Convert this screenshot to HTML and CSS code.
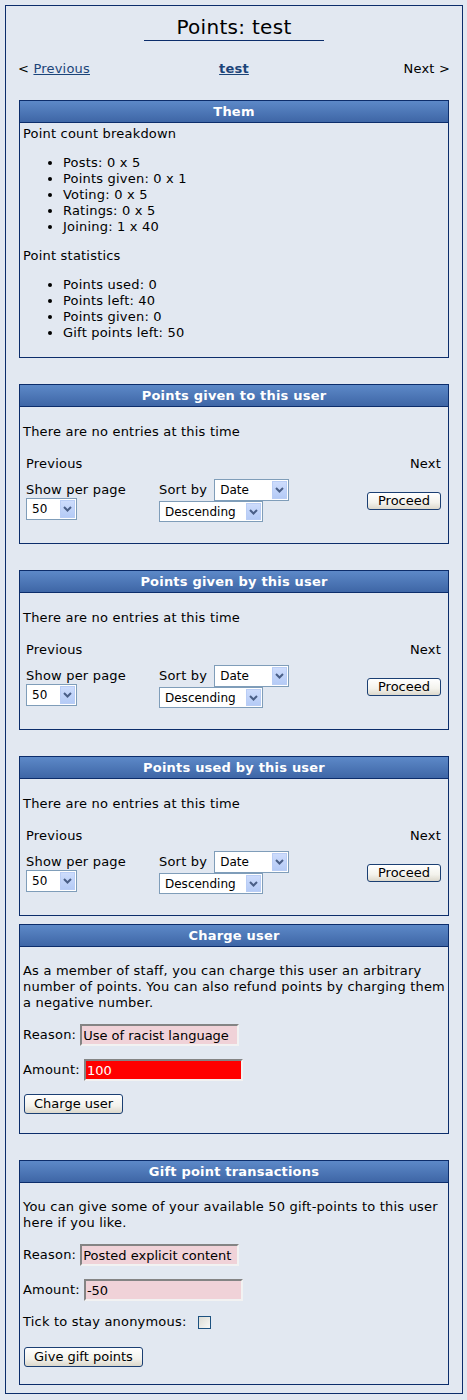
FILE: index.html
```html
<!DOCTYPE html>
<html lang="en">
<head>
  <meta charset="UTF-8" />
  <title>Points: test</title>
  <link rel="stylesheet" href="styles.css">
</head>
<body>
  <div class="page">
    <h1 class="title">Points: test</h1>

    <div class="nav">
      <span class="nav-prev">&lt; <a href="#">Previous</a></span>
      <a class="nav-current" href="#">test</a>
      <span class="nav-next">Next &gt;</span>
    </div>

    <div class="box">
      <div class="box-head">Them</div>
      <div class="box-body">
        Point count breakdown
        <ul>
          <li>Posts: 0 x 5</li>
          <li>Points given: 0 x 1</li>
          <li>Voting: 0 x 5</li>
          <li>Ratings: 0 x 5</li>
          <li>Joining: 1 x 40</li>
        </ul>
        Point statistics
        <ul>
          <li>Points used: 0</li>
          <li>Points left: 40</li>
          <li>Points given: 0</li>
          <li>Gift points left: 50</li>
        </ul>
      </div>
    </div>

    <div class="box">
      <div class="box-head">Points given to this user</div>
      <div class="box-body">
        <p class="empty">There are no entries at this time</p>
        <div class="pager">
          <div class="pager-prev">Previous</div>
          <div></div>
          <div class="pager-next">Next</div>
          <div class="pager-per">
            Show per page
            <span class="select select-num"><select><option>50</option></select><span class="select-arrow"><svg width="9" height="6" viewBox="0 0 9 6"><polyline points="1,1 4.5,4.5 8,1" fill="none" stroke="#4a5f87" stroke-width="2"/></svg></span></span>
          </div>
          <div class="pager-sort">
            <div class="sort-row">Sort by <span class="select select-field"><select><option>Date</option></select><span class="select-arrow"><svg width="9" height="6" viewBox="0 0 9 6"><polyline points="1,1 4.5,4.5 8,1" fill="none" stroke="#4a5f87" stroke-width="2"/></svg></span></span></div>
            <span class="select select-order"><select><option>Descending</option></select><span class="select-arrow"><svg width="9" height="6" viewBox="0 0 9 6"><polyline points="1,1 4.5,4.5 8,1" fill="none" stroke="#4a5f87" stroke-width="2"/></svg></span></span>
          </div>
          <div class="pager-go"><button class="btn btn-small">Proceed</button></div>
        </div>
      </div>
    </div>

    <div class="box">
      <div class="box-head">Points given by this user</div>
      <div class="box-body">
        <p class="empty">There are no entries at this time</p>
        <div class="pager">
          <div class="pager-prev">Previous</div>
          <div></div>
          <div class="pager-next">Next</div>
          <div class="pager-per">
            Show per page
            <span class="select select-num"><select><option>50</option></select><span class="select-arrow"><svg width="9" height="6" viewBox="0 0 9 6"><polyline points="1,1 4.5,4.5 8,1" fill="none" stroke="#4a5f87" stroke-width="2"/></svg></span></span>
          </div>
          <div class="pager-sort">
            <div class="sort-row">Sort by <span class="select select-field"><select><option>Date</option></select><span class="select-arrow"><svg width="9" height="6" viewBox="0 0 9 6"><polyline points="1,1 4.5,4.5 8,1" fill="none" stroke="#4a5f87" stroke-width="2"/></svg></span></span></div>
            <span class="select select-order"><select><option>Descending</option></select><span class="select-arrow"><svg width="9" height="6" viewBox="0 0 9 6"><polyline points="1,1 4.5,4.5 8,1" fill="none" stroke="#4a5f87" stroke-width="2"/></svg></span></span>
          </div>
          <div class="pager-go"><button class="btn btn-small">Proceed</button></div>
        </div>
      </div>
    </div>

    <div class="box box-tight">
      <div class="box-head">Points used by this user</div>
      <div class="box-body">
        <p class="empty">There are no entries at this time</p>
        <div class="pager">
          <div class="pager-prev">Previous</div>
          <div></div>
          <div class="pager-next">Next</div>
          <div class="pager-per">
            Show per page
            <span class="select select-num"><select><option>50</option></select><span class="select-arrow"><svg width="9" height="6" viewBox="0 0 9 6"><polyline points="1,1 4.5,4.5 8,1" fill="none" stroke="#4a5f87" stroke-width="2"/></svg></span></span>
          </div>
          <div class="pager-sort">
            <div class="sort-row">Sort by <span class="select select-field"><select><option>Date</option></select><span class="select-arrow"><svg width="9" height="6" viewBox="0 0 9 6"><polyline points="1,1 4.5,4.5 8,1" fill="none" stroke="#4a5f87" stroke-width="2"/></svg></span></span></div>
            <span class="select select-order"><select><option>Descending</option></select><span class="select-arrow"><svg width="9" height="6" viewBox="0 0 9 6"><polyline points="1,1 4.5,4.5 8,1" fill="none" stroke="#4a5f87" stroke-width="2"/></svg></span></span>
          </div>
          <div class="pager-go"><button class="btn btn-small">Proceed</button></div>
        </div>
      </div>
    </div>

    <div class="box">
      <div class="box-head">Charge user</div>
      <div class="box-body">
        <p>As a member of staff, you can charge this user an arbitrary number of points. You can also refund points by charging them a negative number.</p>
        <p class="field">Reason: <input class="text-input" type="text" value="Use of racist language" /></p>
        <p class="field">Amount: <input class="text-input text-input-alert" type="text" value="100" /></p>
        <p class="actions actions-charge"><button class="btn">Charge user</button></p>
      </div>
    </div>

    <div class="box box-last">
      <div class="box-head">Gift point transactions</div>
      <div class="box-body">
        <p>You can give some of your available 50 gift-points to this user<br>here if you like.</p>
        <p class="field">Reason: <input class="text-input" type="text" value="Posted explicit content" /></p>
        <p class="field">Amount: <input class="text-input" type="text" value="-50" /></p>
        <p class="field field-check">Tick to stay anonymous: <input class="check" type="checkbox" /></p>
        <p class="actions"><button class="btn">Give gift points</button></p>
      </div>
    </div>
  </div>
</body>
</html>
```

FILE: styles.css
```css
body {
  margin: 5px 4px 5px 5px;
  font-family: "DejaVu Sans", Verdana, sans-serif;
  font-size: 13px;
  line-height: 16px;
  letter-spacing: 0.2px;
  color: #000;
  background: #e2e8f1;
}
.page {
  border: 1px solid #0c2d6b;
  padding: 0 13px 8px;
  background: #e2e8f1;
}
.title {
  width: fit-content;
  margin: 9px auto 0;
  padding: 0 32px 1px;
  border-bottom: 1px solid #0c2d6b;
  font-size: 20px;
  line-height: 24px;
  font-weight: normal;
  letter-spacing: 0.3px;
}
.nav {
  display: grid;
  grid-template-columns: 1fr auto 1fr;
  margin: 20px -1px 23px;
}
.nav a {
  color: #1b4479;
}
.nav-current {
  font-weight: bold;
}
.nav-next {
  text-align: right;
}
.box {
  border: 1px solid #0c2d6b;
  margin-bottom: 26px;
}
.box-tight {
  margin-bottom: 8px;
}
.box-last {
  margin-bottom: 0;
}
.box-head {
  height: 21px;
  line-height: 21px;
  border-bottom: 1px solid #0c2d6b;
  background: linear-gradient(#5d89c8, #3e66a6);
  color: #fff;
  font-weight: bold;
  text-align: center;
}
.box-body {
  padding: 3px;
}
.box-body ul {
  margin: 13px 0;
  padding-left: 40px;
}
.box-body p {
  margin: 13px 0;
}
.box-body .empty {
  margin: 14px 0 16px;
}
.pager {
  display: grid;
  grid-template-columns: 133px 1fr auto;
  row-gap: 7px;
  align-items: center;
  padding: 0 4px 0 3px;
  margin-bottom: 18px;
}
.pager-next {
  text-align: right;
}
.pager-per {
  display: flex;
  flex-direction: column;
  align-items: flex-start;
}
.pager-sort {
  display: flex;
  flex-direction: column;
  align-items: flex-start;
}
.sort-row {
  display: flex;
  align-items: center;
  gap: 7px;
}
.select {
  position: relative;
  display: inline-block;
}
.select select {
  appearance: none;
  -webkit-appearance: none;
  display: block;
  height: 22px;
  margin: 0;
  padding: 0 0 0 5px;
  border: 1px solid #7f9db9;
  border-radius: 0;
  background: #fff;
  font-family: "DejaVu Sans", Verdana, sans-serif;
  font-size: 12px;
  color: #000;
}
.select-num select { width: 51px; }
.select-field select { width: 75px; }
.select-order select { width: 104px; height: 21px; }
.select-arrow {
  position: absolute;
  top: 2px;
  right: 2px;
  bottom: 2px;
  width: 15px;
  display: flex;
  align-items: center;
  justify-content: center;
  border: 1px solid #b9cdf5;
  box-sizing: border-box;
  background: linear-gradient(#cddcfc, #b5cbf6);
  pointer-events: none;
}
.select-arrow svg {
  display: block;
}
.pager-go {
  justify-self: end;
}
.btn {
  height: 20px;
  margin: 0 0 0 1px;
  padding: 0 9px;
  border: 1px solid #1b3f73;
  border-radius: 3px;
  background: linear-gradient(#ffffff, #f3f2ec 60%, #dcd8cc);
  font-family: "DejaVu Sans", Verdana, sans-serif;
  font-size: 13px;
  line-height: 16px;
  color: #000;
}
.btn-small {
  height: 18px;
  padding: 0 10px;
  margin: 0;
}
.field {
  display: flex;
  align-items: center;
}
.text-input {
  width: 159px;
  height: 22px;
  box-sizing: border-box;
  margin: 0 0 0 4px;
  padding: 0 1px;
  border: 2px solid;
  border-color: #848484 #f2f2f2 #f2f2f2 #848484;
  background: #f0d2d8;
  font-family: "DejaVu Sans", Verdana, sans-serif;
  font-size: 13px;
  color: #000;
  outline: none;
}
.text-input-alert {
  background: #ff0000;
  color: #fff;
}
.field-check {
  min-height: 16px;
  margin-bottom: 17px !important;
}
.check {
  appearance: none;
  -webkit-appearance: none;
  width: 13px;
  height: 13px;
  margin: 0 0 0 11px;
  border: 1px solid #1c5180;
  background: linear-gradient(135deg, #dcdcd5, #f8f8f6);
}
.actions {
  margin-bottom: 14px !important;
}
.actions-charge {
  margin-bottom: 16px !important;
}
```
